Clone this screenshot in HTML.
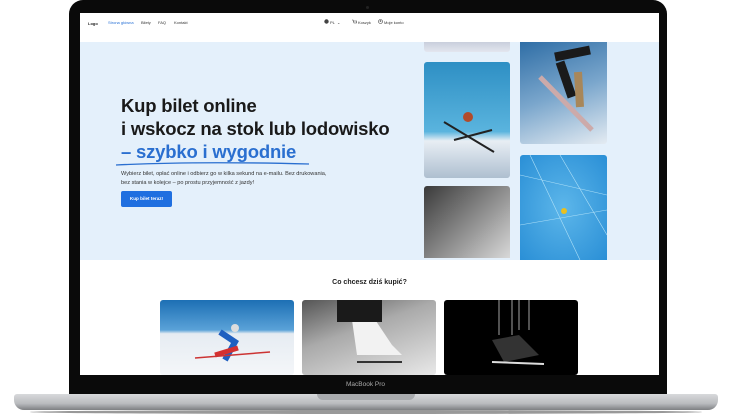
<!DOCTYPE html><html><head><meta charset="utf-8"><style>
*{margin:0;padding:0;box-sizing:border-box}
body{width:731px;height:419px;background:#fff;position:relative;overflow:hidden;font-family:"Liberation Sans",sans-serif}
.bez{position:absolute;left:69px;top:0;width:598px;height:397px;background:#0a0a0a;border-radius:14px 14px 0 0}
.base{position:absolute;left:14px;top:394px;width:704px;height:16px;background:linear-gradient(#d8d9db,#b9bbbe 60%,#7d7f82);border-radius:3px 3px 10px 10px}
.notch{position:absolute;left:317px;top:394px;width:98px;height:6px;background:#a9abae;border-radius:0 0 6px 6px}
.shadow{position:absolute;left:30px;top:410px;width:672px;height:4px;background:#333;border-radius:50%;opacity:.5}
.scr{position:absolute;left:80px;top:13px;width:579px;height:362px;background:#fff;overflow:hidden}
.hdr{position:absolute;left:0;top:0;width:579px;height:29px;font-size:4px;color:#333}
.hero{position:absolute;left:0;top:29px;width:579px;height:218px;background:#e4f0fb}
.img{position:absolute;border-radius:3px;overflow:hidden}
h1{position:absolute;left:41px;top:81px;font-size:18.5px;line-height:23px;color:#1a1a1a;font-weight:bold;letter-spacing:-.2px}
</style></head><body>
<div class="bez"></div><div style="position:absolute;left:366px;top:6px;width:3px;height:3px;border-radius:50%;background:#222"></div>
<div class="scr">
<div class="hdr">
<span style="position:absolute;left:8px;top:8px;font-weight:bold;color:#222">Logo</span>
<span style="position:absolute;left:28px;top:7px;color:#2a72d6">Strona główna</span>
<span style="position:absolute;left:61px;top:7px">Bilety</span>
<span style="position:absolute;left:78px;top:7px">FAQ</span>
<span style="position:absolute;left:94px;top:7px">Kontakt</span>
<svg style="position:absolute;left:244px;top:6px" width="5" height="5"><circle cx="2.5" cy="2.5" r="2.2" fill="#444"/></svg>
<span style="position:absolute;left:250px;top:7px">PL &nbsp;⌄</span>
<svg style="position:absolute;left:272px;top:6px" width="5" height="5"><path d="M0 1h1l1 3h2.5l.5-2H1.5" stroke="#444" stroke-width=".6" fill="none"/></svg>
<span style="position:absolute;left:278px;top:7px">Koszyk</span>
<svg style="position:absolute;left:298px;top:6px" width="5" height="5"><circle cx="2.5" cy="2.5" r="2" stroke="#444" stroke-width=".6" fill="none"/><circle cx="2.5" cy="2" r=".8" fill="#444"/></svg>
<span style="position:absolute;left:304px;top:7px">Moje konto</span>
</div>
<div class="hero"></div>
<h1>Kup bilet online<br>i wskocz na stok lub lodowisko<br><span style="color:#2a6fd0">– szybko i wygodnie</span></h1>
<svg style="position:absolute;left:34px;top:147px" width="200" height="8"><path d="M2 5 Q80 1 195 4" stroke="#2a6fd0" stroke-width="1.3" fill="none"/></svg>
<div style="position:absolute;left:41px;top:157px;width:210px;font-size:5.6px;line-height:8.5px;color:#333">Wybierz bilet, opłać online i odbierz go w kilka sekund na e-mailu. Bez drukowania, bez stania w kolejce – po prostu przyjemność z jazdy!</div>
<div style="position:absolute;left:41px;top:178px;width:51px;height:16px;background:#1f6fe0;border-radius:2px;color:#fff;font-size:4.6px;font-weight:bold;text-align:center;line-height:16px">Kup bilet teraz!</div>
<div class="img" style="left:344px;top:29px;width:86px;height:10px;border-radius:0 0 3px 3px;background:linear-gradient(#c9cfdc,#e3e6ef)"></div>
<div class="img" style="left:344px;top:49px;width:86px;height:116px;background:linear-gradient(#2e8fc4,#5ab4de 60%,#e8eef4 68%,#aebfd0)">
<svg width="86" height="116"><path d="M20 60 L70 90 M30 78 L68 68" stroke="#222" stroke-width="2"/><circle cx="44" cy="55" r="5" fill="#b24b2a"/></svg></div>
<div class="img" style="left:344px;top:173px;width:86px;height:72px;border-radius:3px 3px 0 0;background:linear-gradient(135deg,#3a3a3a,#888 50%,#d8d8d8)"></div>
<div class="img" style="left:440px;top:29px;width:87px;height:102px;border-radius:0 0 3px 3px;background:linear-gradient(160deg,#2f6ea6,#7aa6cc 50%,#e4ebf2)">
<svg width="87" height="102"><path d="M20 35 L72 88" stroke="#caa" stroke-width="5"/><path d="M35 15 L70 8 M40 20 L52 55" stroke="#1a1a1a" stroke-width="9"/><path d="M58 30 L60 65" stroke="#a8875a" stroke-width="8"/></svg></div>
<div class="img" style="left:440px;top:142px;width:87px;height:105px;border-radius:3px 3px 0 0;background:radial-gradient(#5cb6ea,#2a8fd6)">
<svg width="87" height="105"><path d="M0 20L87 40M10 0L60 105M0 70L87 55M40 0L87 80" stroke="#aee0f8" stroke-width=".6" fill="none"/><circle cx="44" cy="56" r="3" fill="#e8c020"/></svg></div>
<div style="position:absolute;left:0;top:266px;width:579px;text-align:center;font-size:7px;font-weight:bold;color:#222">Co chcesz dziś kupić?</div>
<div class="img" style="left:80px;top:287px;width:134px;height:75px;background:linear-gradient(#1d6fb4,#5aa2d8 40%,#e6ecf2 45%,#f4f6f9)">
<svg width="134" height="75"><path d="M60 32 L75 42 L65 60" stroke="#1f5fc0" stroke-width="6" fill="none"/><path d="M55 55 L78 48" stroke="#d43030" stroke-width="5"/><circle cx="75" cy="28" r="4" fill="#ddd"/><path d="M35 58 L110 52" stroke="#c33" stroke-width="1.5"/></svg></div>
<div class="img" style="left:222px;top:287px;width:134px;height:75px;background:linear-gradient(160deg,#555,#aaa 40%,#e8e8e8)">
<svg width="134" height="75"><path d="M50 20 L70 15 L90 45 L100 55 L55 55 Z" fill="#f2f2f2"/><path d="M55 62 L100 62" stroke="#333" stroke-width="2"/><rect x="35" y="0" width="45" height="22" fill="#1a1a1a"/></svg></div>
<div class="img" style="left:364px;top:287px;width:134px;height:75px;background:#000">
<svg width="134" height="75"><path d="M55 0V35M68 0V35M75 0V30M85 0V30" stroke="#ccc" stroke-width=".8"/><path d="M48 40 L75 35 L95 55 L60 62 Z" fill="#333"/><path d="M48 62 L100 64" stroke="#ddd" stroke-width="2"/></svg></div>
</div>
<div style="position:absolute;left:0;top:381px;width:731px;text-align:center;font-size:6.5px;color:#aaa">MacBook Pro</div>
<div class="base"></div><div class="notch"></div><div class="shadow"></div>
</body></html>
